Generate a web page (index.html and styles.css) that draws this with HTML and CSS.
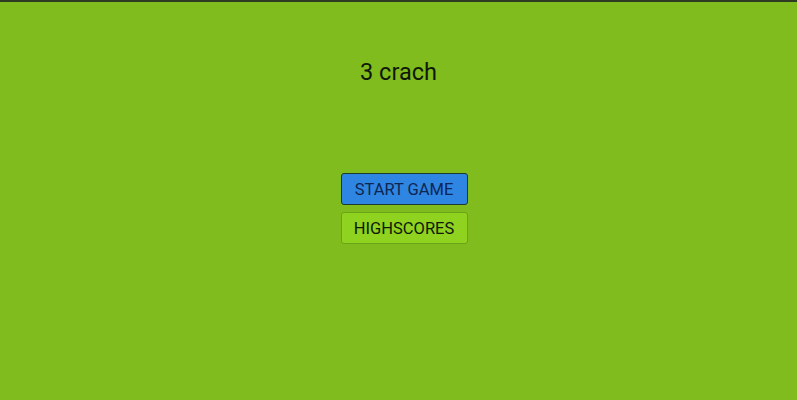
FILE: index.html
```html
<!DOCTYPE html>
<html>
<head>
<meta charset="utf-8">
<link rel="stylesheet" href="styles.css">
</head>
<body>
<div class="topline"></div>
<main class="screen">
  <h1 class="title">3 crach</h1>
  <div class="menu">
    <button class="btn btn-start">START GAME</button>
    <button class="btn btn-scores">HIGHSCORES</button>
  </div>
</main>
</body>
</html>
```
FILE: styles.css
```css
html, body {
  margin: 0;
  padding: 0;
  width: 797px;
  height: 400px;
  overflow: hidden;
  background: #80bc1d;
  font-family: Roboto, "Liberation Sans", sans-serif;
}
.topline {
  height: 2px;
  background: #2f3a22;
}
.screen {
  display: flex;
  flex-direction: column;
  align-items: center;
}
.title {
  margin: 56px 0 0 0;
  font-size: 23.5px;
  font-weight: 400;
  line-height: 28px;
  color: #0f1806;
}
.menu {
  margin-top: 87px;
  padding-left: 11px;
  display: flex;
  flex-direction: column;
  gap: 7px;
}
.btn {
  width: 127px;
  height: 32px;
  font-family: Roboto, "Liberation Sans", sans-serif;
  font-size: 16.5px;
  border-radius: 3px;
  padding: 0;
  text-align: center;
}
.btn-start {
  background: #2e86e2;
  border: 1.5px solid #1d3a2c;
  color: #0f2552;
}
.btn-scores {
  background: #8fd21f;
  border: 1px solid #6aa218;
  color: #0e1a06;
}
```
